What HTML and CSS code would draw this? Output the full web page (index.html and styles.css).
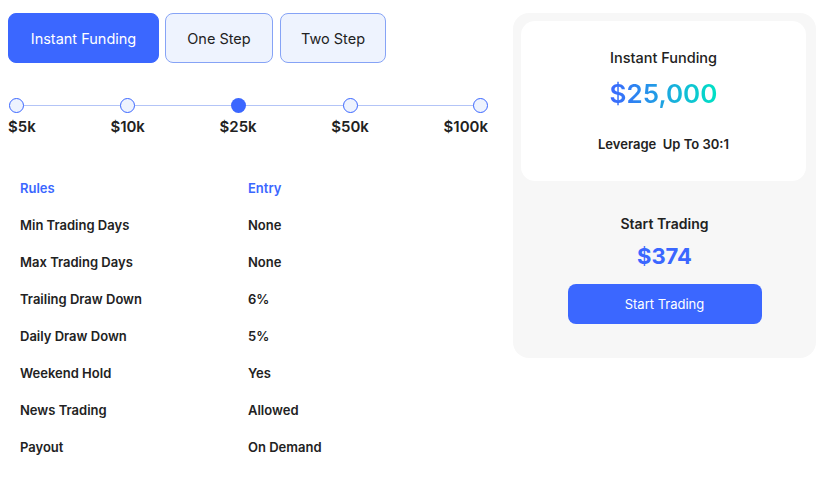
FILE: index.html
```html
<!DOCTYPE html>
<html lang="en">
<head>
    <meta charset="UTF-8">
    <meta name="viewport" content="width=device-width, initial-scale=1.0">
    <title>Challenge Pricing</title>
    <link rel="stylesheet" href="styles.css">
</head>

<body>
    <div class="wrapper">
        <div class="left">
            <div class="tabs">
                <button class="tab active">Instant Funding</button>
                <button class="tab">One Step</button>
                <button class="tab">Two Step</button>
            </div>

            <div class="slider">
                <div class="stop first"><span class="dot"></span><span class="amount">$5k</span></div>
                <div class="stop"><span class="dot"></span><span class="amount">$10k</span></div>
                <div class="stop"><span class="dot selected"></span><span class="amount">$25k</span></div>
                <div class="stop"><span class="dot"></span><span class="amount">$50k</span></div>
                <div class="stop last"><span class="dot"></span><span class="amount">$100k</span></div>
            </div>

            <table class="rules">
                <tr class="head"><td>Rules</td><td>Entry</td></tr>
                <tr><td>Min Trading Days</td><td>None</td></tr>
                <tr><td>Max Trading Days</td><td>None</td></tr>
                <tr><td>Trailing Draw Down</td><td>6%</td></tr>
                <tr><td>Daily Draw Down</td><td>5%</td></tr>
                <tr><td>Weekend Hold</td><td>Yes</td></tr>
                <tr><td>News Trading</td><td>Allowed</td></tr>
                <tr><td>Payout</td><td>On Demand</td></tr>
            </table>
        </div>

        <div class="summary">
            <div class="card">
                <div class="card-title">Instant Funding</div>
                <div class="card-amount">$25,000</div>
                <div class="leverage">Leverage&nbsp; Up To 30:1</div>
            </div>
            <div class="checkout">
                <div class="checkout-title">Start Trading</div>
                <div class="price">$374</div>
                <button class="start">Start Trading</button>
            </div>
        </div>
    </div>
</body>
</html>
```

FILE: styles.css
```css
body {
    font-family: Inter, "Noto Sans", sans-serif;
    background-color: #fff;
    color: #222;
    margin: 0;
    padding: 0;
}

.wrapper {
    display: flex;
    align-items: flex-start;
    padding: 13px 11px 0 8px;
    gap: 25px;
}

.left {
    width: 480px;
}

.tabs {
    display: flex;
    gap: 6px;
}

.tab {
    box-sizing: border-box;
    height: 50px;
    padding: 0;
    border: 1px solid #86a3f6;
    border-radius: 8px;
    background-color: #eef3fe;
    color: #222;
    font-family: inherit;
    font-size: 14.5px;
    white-space: nowrap;
    cursor: pointer;
}

.tab:nth-child(2) {
    width: 108px;
}

.tab:nth-child(3) {
    width: 106px;
    margin-left: 1px;
}

.tab.active {
    width: 151px;
    background-color: #3b67ff;
    border-color: #3b67ff;
    color: #fff;
}

.slider {
    position: relative;
    display: flex;
    justify-content: space-between;
    margin-top: 35px;
}

.slider::before {
    content: "";
    position: absolute;
    left: 8px;
    right: 8px;
    top: 7px;
    height: 1px;
    background-color: #b3c4f7;
}

.stop {
    display: flex;
    flex-direction: column;
    align-items: center;
}

.stop.first {
    align-items: flex-start;
}

.stop.last {
    align-items: flex-end;
}

.dot {
    position: relative;
    width: 13px;
    height: 13px;
    border: 1px solid #3b67ff;
    border-radius: 50%;
    background-color: #eef3fe;
}

.dot.selected {
    background-color: #3b67ff;
    width: 15px;
    height: 15px;
    border: none;
}

.stop.first .dot {
    margin-left: 1px;
}

.amount {
    margin-top: 4px;
    font-size: 15px;
    font-weight: 600;
    color: #222;
}

.rules {
    margin-top: 33px;
    margin-left: 12px;
    border-collapse: collapse;
}

.rules td {
    height: 37px;
    padding: 0;
    font-size: 13px;
    font-weight: 600;
    color: #222;
}

.rules td:first-child {
    width: 228px;
}

.rules .head td {
    color: #3b67ff;
}

.summary {
    width: 303px;
    background-color: #f7f7f7;
    border-radius: 16px;
    padding: 8px 0 34px;
    text-align: center;
}

.card {
    margin: 0 10px 0 8px;
    background-color: #fff;
    border-radius: 14px;
    padding: 28px 0 29px;
}

.card-title {
    font-size: 14.5px;
    font-weight: 500;
}

.card-amount {
    margin-top: 12px;
    font-size: 26px;
    font-weight: 600;
    background: linear-gradient(90deg, #3b67ff 0%, #00e2c4 100%);
    -webkit-background-clip: text;
    background-clip: text;
    color: transparent;
    display: inline-block;
}

.leverage {
    margin-top: 27px;
    font-size: 13px;
    font-weight: 600;
}

.checkout {
    padding-top: 34px;
}

.checkout-title {
    font-size: 14px;
    font-weight: 600;
}

.price {
    margin-top: 11px;
    font-size: 22px;
    font-weight: 700;
    color: #3b67ff;
}

.start {
    margin-top: 15px;
    width: 194px;
    height: 40px;
    border: none;
    border-radius: 8px;
    background-color: #3b67ff;
    color: #fff;
    font-family: inherit;
    font-size: 13px;
    cursor: pointer;
}
```
